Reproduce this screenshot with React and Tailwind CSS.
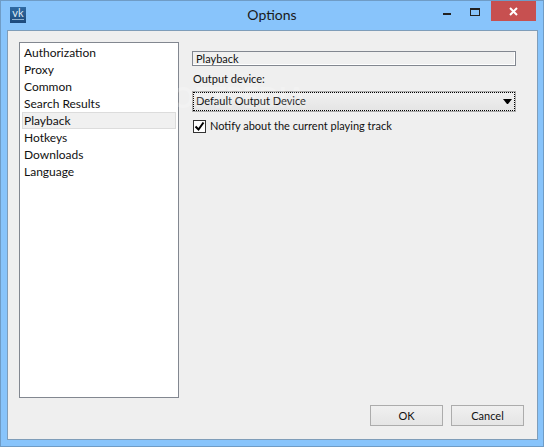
import React from 'react';

const sections = ['Authorization', 'Proxy', 'Common', 'Search Results', 'Playback', 'Hotkeys', 'Downloads', 'Language'];

function AppIcon() {
  return (
    <div className="w-4 h-4 flex flex-col items-center bg-gradient-to-b from-[#2f6aa3] to-[#1d4a7c]">
      <span className="text-[11px] leading-[11px] text-[#dfe9f3]">vk</span>
      <span className="w-3 h-px mt-px bg-[#8fb0cf]" />
    </div>
  );
}

function TitleBar() {
  return (
    <div className="h-[29px] flex items-start">
      <div className="w-[30px] pl-[9px] pt-[6px]">
        <AppIcon />
      </div>
      <div className="flex-1 pt-[4px] pl-[85px] text-center text-[14px] leading-5 text-[#1a1a1a]">Options</div>
      <div className="w-[37px] h-[21px] flex items-center justify-center pt-[3px]">
        <span className="w-2 h-[2px] mt-[1px] bg-[#222]" />
      </div>
      <div className="w-[26px] h-[21px] flex items-center justify-start pl-[5px]">
        <span className="w-[10px] h-2 border border-[#222] border-t-2" />
      </div>
      <div className="w-[45px] h-5 bg-[#c75050] flex items-center justify-center">
        <svg width="9" height="9" viewBox="0 0 9 9">
          <path d="M1 1l7 7M8 1l-7 7" stroke="#fff" strokeWidth="2" fill="none" />
        </svg>
      </div>
      <div className="w-[7px]" />
    </div>
  );
}

function Sidebar() {
  return (
    <div className="w-40 h-[356px] shrink-0 bg-white border border-[#828790] p-[2px] pt-px">
      {sections.map((name) => (
        <div
          key={name}
          className={`h-[17px] pl-px leading-[15px] border ${name === 'Playback' ? 'bg-[#f0f0f0] border-[#dcdcdc]' : 'border-transparent'}`}
        >
          {name}
        </div>
      ))}
    </div>
  );
}

function SettingsPanel() {
  return (
    <div className="w-[324px] ml-[13px] pt-[9px] text-[11px]">
      <div className="h-[15px] border border-[#828790] bg-[#f0f0f0] pl-[3px] leading-[13px] shadow-[inset_-1px_-1px_0_#fff]">
        Playback
      </div>
      <div className="mt-[4px] h-[18px] pl-px leading-[17px]">Output device:</div>
      <div className="mt-[4px] mx-px h-[19px] flex items-center justify-between pl-[2px] pr-[2px] border border-dotted border-black outline outline-1 outline-[#acacac] bg-gradient-to-b from-[#f0f0f0] to-[#e5e5e5]">
        <span>Default Output Device</span>
        <svg width="9" height="5" viewBox="0 0 9 5">
          <path d="M0 0h9L5 5H4z" fill="#000" />
        </svg>
      </div>
      <div className="mt-[8px] h-[15px] flex items-center gap-[4px] pl-[1px]">
        <div className="w-[13px] h-[13px] bg-white border border-[#333] flex items-center justify-center">
          <svg width="11" height="11" viewBox="0 0 11 11">
            <path d="M1.5 5.5l3 3 5-7" stroke="#000" strokeWidth="2" fill="none" />
          </svg>
        </div>
        <span>Notify about the current playing track</span>
      </div>
    </div>
  );
}

function DialogButton({ children }) {
  return (
    <button className="w-[73px] h-[21px] border border-[#acacac] bg-gradient-to-b from-[#f0f0f0] to-[#e5e5e5] text-center text-[11px] leading-[19px]">
      {children}
    </button>
  );
}

export default function App() {
  return (
    <div className="relative w-[544px] h-[447px] overflow-hidden bg-[#88c4fb] border border-[#6f9cc6] text-xs text-[#111] font-['Lato','Open_Sans',sans-serif]">
      <TitleBar />
      <div className="ml-[6px] mr-[5px] h-[410px] bg-[#efefef] border border-[#7f9db9] pt-[11px] px-[11px]">
        <div className="flex">
          <Sidebar />
          <SettingsPanel />
        </div>
        <div className="mt-[7px] flex justify-end gap-[8px] pr-[2px]">
          <DialogButton>OK</DialogButton>
          <DialogButton>Cancel</DialogButton>
        </div>
      </div>
      {/* watermark sits on top of the dialog */}
      <span className="absolute left-[156px] top-[80px] text-[28px] leading-8 font-bold tracking-[-0.5px] text-white/20 pointer-events-none">
        SOFTPEDIA
      </span>
    </div>
  );
}
